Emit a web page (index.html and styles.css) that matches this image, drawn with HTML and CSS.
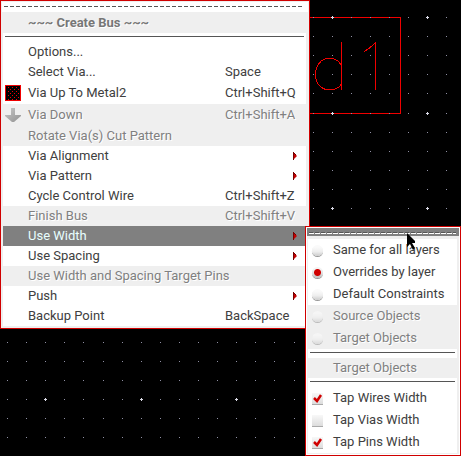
FILE: index.html
```html
<!DOCTYPE html>
<html lang="en">
<head>
<meta charset="utf-8">
<title>Create Bus</title>
<link rel="stylesheet" href="styles.css">
</head>
<body>
<svg class="canvas" aria-hidden="true" shape-rendering="crispEdges">
  <defs>
    <g id="dots" fill="#9090a4">
      <path d="M0 0h1v1h-1zM19 0h1v1h-1zM38 0h1v1h-1zM58 0h1v1h-1zM77 0h1v1h-1zM96 0h1v1h-1zM115 0h1v1h-1zM134 0h1v1h-1zM153 0h1v1h-1zM172 0h1v1h-1z"/>
    </g>
    <path id="cross" fill="#dcdce8" d="M-1 0h3v1h-3zM0 -1h1v3h-1z"/>
    <pattern id="grid" x="43" y="15" width="191" height="191" patternUnits="userSpaceOnUse">
      <use href="#dots" x="2" y="2"/><use href="#dots" x="2" y="21"/><use href="#dots" x="2" y="40"/>
      <use href="#dots" x="2" y="59"/><use href="#dots" x="2" y="78"/><use href="#dots" x="2" y="98"/>
      <use href="#dots" x="2" y="117"/><use href="#dots" x="2" y="136"/><use href="#dots" x="2" y="155"/>
      <use href="#dots" x="2" y="174"/>
      <use href="#cross" x="2" y="2"/><use href="#cross" x="98" y="2"/>
      <use href="#cross" x="2" y="98"/><use href="#cross" x="98" y="98"/>
    </pattern>
  </defs>
  <g fill="none" stroke="#f00000">
    <path d="M0 17.500H400.500V113.500H0"/>
    <path d="M341.500 42V90M375.500 42V90M364 51.500L369 48.500L375.500 42.500M341.500 65L337.500 60.500L332.500 58.500H326.500L321.500 60.500L317.500 65.500L315.500 71.500V77.500L317.500 83.500L321.500 87.500L325.500 89.500H333.500L338.500 87.500L341.500 84"/>
  </g>
  <rect width="100%" height="100%" fill="url(#grid)"/>
</svg>

<svg class="defs" aria-hidden="true">
  <symbol id="arrow" viewBox="0 0 4 8"><path fill="#c40000" d="M0 0L4 4L0 8z"/><path fill="#700" d="M0 0h1v8h-1zM1 1h1v1h-1zM2 2h1v1h-1z"/></symbol>
  <symbol id="mark" viewBox="0 0 11 11"><path d="M2 5L5 8L9 2" fill="none" stroke="#d00000" stroke-width="2.500"/></symbol>
</svg>

<nav class="menu main" aria-label="Create Bus">
  <div class="tear"></div>
  <h1 class="title">~~~ Create Bus ~~~</h1>
  <ul class="list">
    <li class="rule"></li>
    <li><button class="item"><span class="label">Options...</span></button></li>
    <li><button class="item"><span class="label">Select Via...</span><span class="key">Space</span></button></li>
    <li><button class="item tall">
      <svg class="icon" viewBox="0 0 16 16" shape-rendering="crispEdges"><rect width="16" height="16" fill="#f00000"/><rect x="1" y="1" width="14" height="14"/><path fill="#f00000" d="M3 2h1v1h-1zM7 2h1v1h-1zM11 2h1v1h-1zM5 4h1v1h-1zM9 4h1v1h-1zM13 4h1v1h-1zM3 6h1v1h-1zM7 6h1v1h-1zM11 6h1v1h-1zM5 8h1v1h-1zM9 8h1v1h-1zM13 8h1v1h-1zM3 10h1v1h-1zM7 10h1v1h-1zM11 10h1v1h-1zM5 12h1v1h-1zM9 12h1v1h-1zM13 12h1v1h-1zM3 14h1v1h-1zM7 14h1v1h-1zM11 14h1v1h-1z"/></svg>
      <span class="label">Via Up To Metal2</span><span class="key">Ctrl+Shift+Q</span></button></li>
    <li><button class="item tall" disabled>
      <svg class="icon" viewBox="0 0 16 16"><defs><linearGradient id="down" x2="1" y2="1"><stop stop-color="#c8c8c8"/><stop offset="1" stop-color="#929292"/></linearGradient></defs><path fill="url(#down)" d="M6 1h4v7h6v1L9 15H7L0 9V8h6z"/></svg>
      <span class="label">Via Down</span><span class="key">Ctrl+Shift+A</span></button></li>
    <li><button class="item" disabled><span class="label">Rotate Via(s) Cut Pattern</span></button></li>
    <li><button class="item"><span class="label">Via Alignment</span><svg class="more"><use href="#arrow"/></svg></button></li>
    <li><button class="item"><span class="label">Via Pattern</span><svg class="more"><use href="#arrow"/></svg></button></li>
    <li><button class="item"><span class="label">Cycle Control Wire</span><span class="key">Ctrl+Shift+Z</span></button></li>
    <li><button class="item" disabled><span class="label">Finish Bus</span><span class="key">Ctrl+Shift+V</span></button></li>
    <li class="parent"><button class="item open" aria-expanded="true"><span class="label">Use Width</span><svg class="more"><use href="#arrow"/></svg></button>
      <div class="menu sub">
        <div class="tear active"></div>
        <ul class="list">
          <li><label class="item tall"><input class="radio" type="radio" name="width"><span class="label">Same for all layers</span></label></li>
          <li><label class="item tall"><input class="radio" type="radio" name="width" checked><span class="label">Overrides by layer</span></label></li>
          <li><label class="item tall"><input class="radio" type="radio" name="width"><span class="label">Default Constraints</span></label></li>
          <li><label class="item tall off"><input class="radio" type="radio" name="width" disabled><span class="label">Source Objects</span></label></li>
          <li><label class="item tall off"><input class="radio" type="radio" name="width" disabled><span class="label">Target Objects</span></label></li>
          <li class="rule"></li>
          <li><button class="item" disabled><span class="label">Target Objects</span></button></li>
          <li class="rule"></li>
          <li><label class="item tall"><span class="tick"><input class="check" type="checkbox" checked><svg class="mark"><use href="#mark"/></svg></span><span class="label">Tap Wires Width</span></label></li>
          <li><label class="item tall"><span class="tick"><input class="check" type="checkbox"><svg class="mark"><use href="#mark"/></svg></span><span class="label">Tap Vias Width</span></label></li>
          <li><label class="item tall"><span class="tick"><input class="check" type="checkbox" checked><svg class="mark"><use href="#mark"/></svg></span><span class="label">Tap Pins Width</span></label></li>
        </ul>
        <svg class="pointer" viewBox="0 0 9 17" aria-hidden="true"><path d="M0 0L8 8V10H5L8 15L6 17L3 11L0 14z"/></svg>
      </div>
    </li>
    <li><button class="item"><span class="label">Use Spacing</span><svg class="more"><use href="#arrow"/></svg></button></li>
    <li><button class="item" disabled><span class="label">Use Width and Spacing Target Pins</span></button></li>
    <li><button class="item"><span class="label">Push</span><svg class="more"><use href="#arrow"/></svg></button></li>
    <li><button class="item"><span class="label">Backup Point</span><span class="key">BackSpace</span></button></li>
  </ul>
</nav>
</body>
</html>
```
FILE: styles.css
```css
* { box-sizing: border-box; }

body {
  min-height: 100vh;
  margin: 0;
  background: #000;
  color: #404040;
  font: 13px/20px Roboto, "Liberation Sans", Arial, sans-serif;
}

.canvas {
  position: absolute;
  inset: 0;
  width: 100%;
  height: 100%;
}

.defs { position: absolute; width: 0; height: 0; }

.menu {
  position: relative;
  width: max-content;
  background: #efefef;
  border: 1px solid #d00000;
}

.main { min-width: 310px; padding: 1px 0; }

.tear {
  height: 10px;
  margin: 0 1px;
  padding: 4px 4px 0 2px;
  background: #fff;
}

.tear::before {
  content: "";
  display: block;
  height: 1px;
  background: repeating-linear-gradient(90deg, #555 0 4px, transparent 4px 6px);
}

.title {
  margin: 0;
  padding-left: 27px;
  font-size: 13px;
  line-height: 21px;
  color: #777;
  text-shadow: 1px 1px #fff;
}

.list {
  list-style: none;
  margin: 0 3px 0 2px;
  padding: 0 0 1px;
}

.rule {
  height: 9px;
  padding: 3px 2px 0;
  background: #fff;
}

.rule::before {
  content: "";
  display: block;
  height: 1px;
  background: #555;
}

.item {
  display: grid;
  grid-template-columns: 25px 1fr 81px;
  align-items: center;
  width: 100%;
  height: 20px;
  margin: 0;
  padding: 0;
  border: 0;
  background: #fff;
  color: inherit;
  font: inherit;
  text-align: left;
  white-space: nowrap;
}

.tall { height: 22px; }

.item:disabled, .off {
  background: #efefef;
  color: #808080;
  text-shadow: 1px 1px #fff;
}

.open { background: #808080; color: #e8ffff; }

.label { grid-column: 2; }
.label:last-child { grid-column: 2 / -1; }
.key { grid-column: 3; }

.icon { width: 16px; height: 16px; margin-left: 2px; }

.more {
  grid-column: 3;
  justify-self: end;
  width: 4px;
  height: 8px;
  margin-right: 9px;
}

.parent { position: relative; }

.sub {
  position: absolute;
  top: 0;
  left: calc(100% - 1px);
  min-width: 156px;
  background: #efefef;
  box-shadow: inset 0 0 0 1px #fff;
  padding: 1px 0;
}

.sub .list { padding-top: 3px; }
.sub .item { grid-template-columns: 25px 1fr; }

.active {
  height: 8px;
  padding: 4px 3px 0 2px;
  background: #808080;
}

.active::before {
  height: 2px;
  background:
    repeating-linear-gradient(90deg, #fff 0 5px, transparent 5px 6px) 0 1px / 100% 1px no-repeat,
    repeating-linear-gradient(90deg, #555 0 4px, transparent 4px 6px) 0 0 / 100% 1px no-repeat;
}

.radio {
  appearance: none;
  width: 11px;
  height: 11px;
  margin: 0 0 0 4px;
  border-radius: 50%;
  background: linear-gradient(#fafafa 20%, #eee 60%, #ccc);
  box-shadow: 0 1px #999;
}

.radio:checked {
  background:
    radial-gradient(circle, #d00000 0 3px, transparent 4px),
    linear-gradient(#f4f4f4 20%, #ddd 60%, #bbb);
}

.radio:disabled { opacity: .6; }

.tick {
  display: grid;
  width: 11px;
  height: 11px;
  margin-left: 4px;
}

.check, .mark {
  grid-area: 1 / 1;
  width: 11px;
  height: 11px;
  margin: 0;
}

.check {
  appearance: none;
  background: linear-gradient(#f8f8f8, #ddd);
  box-shadow: 0 1px #aaa;
}

.mark { z-index: 1; pointer-events: none; }
.check:not(:checked) + .mark { visibility: hidden; }

.pointer {
  position: absolute;
  top: 6px;
  left: 101px;
  width: 9px;
  height: 17px;
}
```
